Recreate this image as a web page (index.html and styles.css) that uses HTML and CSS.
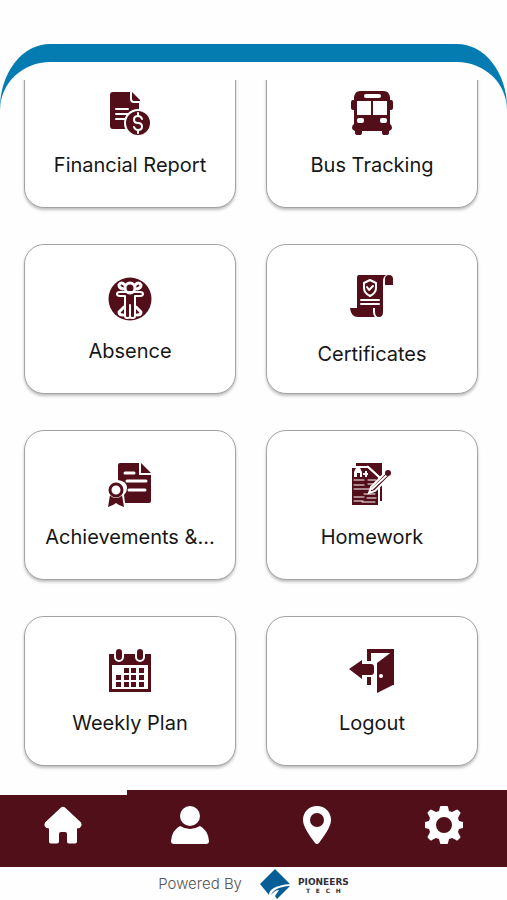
FILE: index.html
```html
<!DOCTYPE html>
<html lang="en">
<head>
    <meta charset="UTF-8">
    <meta name="viewport" content="width=device-width, initial-scale=1.0">
    <title>Home</title>
    <link rel="stylesheet" href="styles.css">
</head>
<body>
    <div class="panel">
        <main class="sheet">
            <div class="scroll">
                <div class="cards">
                    <a class="card" href="#financial">
                        <svg class="icon" viewBox="-1 0 44 44">
                            <path d="M4 1h17v7q0 4 4 4h5v8a14 14 0 0 0-13 18H4q-3 0-3-3V4q0-3 3-3z"/>
                            <path d="M23 1l8 8v1h-6q-2 0-2-2z"/>
                            <path class="line" d="M7 18h12M7 23h12M7 28h10" stroke-width="2"/>
                            <circle class="edge" cx="29" cy="32" r="13" stroke-width="2"/>
                            <path class="line" d="M33 28q-1-3-4-3-4 0-4 3.500t4 3.500 4 3.500-4 3.500q-3 0-4-3M29 22v3M29 39v3" stroke-width="2"/>
                        </svg>
                        <span class="label">Financial Report</span>
                    </a>
                    <a class="card" href="#bus">
                        <svg class="icon" viewBox="0 0 44 44">
                            <path d="M10 0h24q5 0 6 6v3h1q2 0 2 2v6q0 2-2 2h-1v14q2 1 2 4 0 2-3 3v2q0 2-2 2h-2q-3 0-3-2v-2H12v2q0 2-3 2H7q-2 0-2-2v-2q-3-1-3-3 0-3 2-4V19H3q-2 0-2-2v-6q0-2 2-2h1V6q1-6 6-6z"/>
                            <rect class="gap" x="14" y="3" width="17" height="4" rx="2"/>
                            <path class="gap" d="M7 10h14v14H7zM23 10h14v14H23z"/>
                            <rect class="gap" x="7" y="27" width="7" height="5" rx="2"/>
                            <rect class="gap" x="30" y="27" width="7" height="5" rx="2"/>
                        </svg>
                        <span class="label">Bus Tracking</span>
                    </a>
                    <a class="card" href="#absence">
                        <svg class="icon" viewBox="0 0 44 44">
                            <circle cx="22" cy="22" r="21.500"/>
                            <path class="line" d="M17 8q-4-4-6 0 0 3 4 4M27 8q4-4 6 0 0 3-4 4" stroke-width="3"/>
                            <circle class="line" cx="22" cy="11" r="5" stroke-width="3"/>
                            <path class="line" d="M12 15q-3 0-3 2t3 2h5v20q0 2 2 2h1q2 0 2-2V28v11q0 2 2 2h1q2 0 2-2V19h5q3 0 3-2t-3-2z" stroke-width="2"/>
                            <path class="line" d="M16 30l-5 5q0 3 4 3M28 30l5 5q0 3-4 3" stroke-width="3"/>
                        </svg>
                        <span class="label">Absence</span>
                    </a>
                    <a class="card card-raised" href="#certificates">
                        <svg class="icon" viewBox="1 0 44 44">
                            <path d="M10 1h27q-3 2-3 6v31q0 5-4 5t-4-5v-4H8V4q0-3 2-3z"/>
                            <path d="M36 11V5q0-4 4-4t4 4v6zM1 34h23v4q0 3 2 5H9q-7 0-8-9z"/>
                            <path class="line" d="M21 6l6 3v5q0 5-6 8-6-3-6-8V9zM18 13l2 3 4-4" stroke-width="2"/>
                            <path class="line" d="M12 26h18M12 30h18" stroke-width="2"/>
                        </svg>
                        <span class="label">Certificates</span>
                    </a>
                    <a class="card" href="#achievements">
                        <svg class="icon" viewBox="0 0 44 44">
                            <path d="M12 0h19v12h12v26q0 2-2 2H17l-1-8q3-3 3-7 0-7-9-8V2q0-2 2-2z"/>
                            <path d="M33 0l10 10H33z"/>
                            <path class="line" d="M17 10h9M19 18h19M21 27h16" stroke-width="3"/>
                            <path d="M2 32h12l2 12-5-2-3-2-3 2-5 2z"/>
                            <circle class="gap" cx="8" cy="27" r="8"/>
                            <circle class="ring" cx="8" cy="27" r="6" stroke-width="3"/>
                        </svg>
                        <span class="label">Achievements &amp;...</span>
                    </a>
                    <a class="card" href="#homework">
                        <svg class="icon" viewBox="1 0 44 44">
                            <path d="M7 0h26v38H7z"/>
                            <path class="edge" d="M2 4h17l11 10v29H2z" stroke-width="2"/>
                            <path class="gap" d="M5 14V9l2-4h4l2 4v5h-2v-4H8v4zM14 10h5v2h-5zM16 8h2v6h-2z"/>
                            <path class="line" d="M19 3l12 11M5 17h10M19 17h8M5 22h10M19 21h7M5 26h18M5 34h10M15 31h11M18 35h9M5 38h9M13 39h13" stroke-width="1"/>
                            <path class="edge" d="M20 30l2-6 15-15 4 4-15 15z" stroke-width="2"/>
                            <path class="line" d="M23 26L38 12" stroke-width="2"/>
                            <circle cx="39" cy="10" r="3"/>
                        </svg>
                        <span class="label">Homework</span>
                    </a>
                    <a class="card" href="#plan">
                        <svg class="icon" viewBox="0 0 44 44">
                            <path d="M1 5h42v38H1z"/>
                            <path class="gap" d="M4 16h36v24H4z"/>
                            <rect class="edge" x="7" y="-1" width="8" height="13" rx="4" stroke-width="2"/>
                            <rect class="edge" x="28" y="-1" width="8" height="13" rx="4" stroke-width="2"/>
                            <path d="M16 19h5v5h-5zM23 19h5v5h-5zM31 19h5v5h-5zM8 26h5v5H8zM16 26h5v5h-5zM23 26h5v5h-5zM31 26h5v5h-5zM8 33h5v5H8zM16 33h5v5h-5zM23 33h5v5h-5zM31 33h5v5h-5z"/>
                        </svg>
                        <span class="label">Weekly Plan</span>
                    </a>
                    <a class="card" href="#logout">
                        <svg class="icon" viewBox="1 0 44 44">
                            <path d="M18 0h27v36h-4V4H22v8h-4zM18 28h4v8h-4z"/>
                            <path d="M0 20l13-9v4h9q3 0 3 3v5q0 3-3 3h-9v4z"/>
                            <path d="M28 14L44 2v34L28 44z"/>
                            <circle class="gap" cx="32" cy="27" r="2"/>
                        </svg>
                        <span class="label">Logout</span>
                    </a>
                </div>
            </div>
        </main>
    </div>

    <nav class="tabs">
        <a class="tab active" href="#home" aria-label="Home">
            <svg class="tab-icon" viewBox="0 0 38 38">
                <path d="M17 1.500q2-1.500 4 0l16 15q1 2 0 4-1 2-4 2v13q0 2-3 2h-5q-2 0-2-2V28q0-2-2-2h-4q-2 0-2 2v7.500q0 2-2 2H8q-3 0-3-2v-13q-3 0-4-2-1-2 0-4z"/>
            </svg>
        </a>
        <a class="tab" href="#profile" aria-label="Profile">
            <svg class="tab-icon" viewBox="0 0 38 38">
                <circle cx="19" cy="10" r="10"/>
                <path d="M9 20q10 6 20 0 8 4 9 15 0 3-3 3H3q-3 0-3-3 1-11 9-15z"/>
            </svg>
        </a>
        <a class="tab" href="#location" aria-label="Location">
            <svg class="tab-icon" viewBox="0 0 38 38">
                <path fill-rule="evenodd" d="M19 0c8 0 14 6 14 14 0 7-7 16-12 23q-2 2-4 0C12 30 5 21 5 14 5 6 11 0 19 0zm0 7a7 7 0 1 0 0 14 7 7 0 0 0 0-14z"/>
            </svg>
        </a>
        <a class="tab" href="#settings" aria-label="Settings">
            <svg class="tab-icon" viewBox="0 0 38 38">
                <path fill-rule="evenodd" d="M16 0h6q1 0 1 1l1 4 3 1 4-2q1-1 2 0l2 2q1 1 0 2l-2 4 1 3 4 1q1 0 1 1v4q0 1-1 1l-4 1-1 3 2 4q1 1 0 2l-2 2q-1 1-2 0l-4-2-3 1-1 4q0 1-1 1h-6q-1 0-1-1l-1-4-3-1-4 2q-1 1-2 0l-2-2q-1-1 0-2l2-4-1-3-4-1q-1 0-1-1v-4q0-1 1-1l4-1 1-3-2-4q-1-1 0-2l2-2q1-1 2 0l4 2 3-1 1-4q0-1 1-1zm3 11a8 8 0 1 0 0 16 8 8 0 0 0 0-16z"/>
            </svg>
        </a>
    </nav>

    <footer class="footer">
        <span class="powered">Powered By</span>
        <svg class="logo" viewBox="0 0 32 32">
            <path d="M16 1l15 15q-21 2-21 11L1 16z"/>
            <path d="M31 18l-13 13-2-3 4-6q-4 0-8 5 3-8 19-9z"/>
        </svg>
        <span class="brand">
            <span class="brand-name">PIONEERS</span>
            <span class="brand-sub"><span>T</span><span>E</span><span>C</span><span>H</span></span>
        </span>
    </footer>
</body>
</html>
```

FILE: styles.css
```css
* {
    box-sizing: border-box;
}
body {
    margin: 0;
    padding-top: 44px;
    height: 100vh;
    display: flex;
    flex-direction: column;
    background-color: #fefefe;
    color: #161616;
    font-family: Inter, "Liberation Sans", sans-serif;
}
.panel {
    flex: 1;
    min-height: 0;
    display: flex;
    background: linear-gradient(#047bb1 80px, #fefefe 80px);
    border-radius: 50px 50px 0 0 / 64px 64px 0 0;
}
.sheet {
    flex: 1;
    display: flex;
    margin-top: 18px;
    padding-top: 18px;
    background-color: #fefefe;
    border-radius: 50px 50px 0 0 / 48px 48px 0 0;
}
/* list is scrolled to its end */
.scroll {
    flex: 1;
    display: flex;
    flex-direction: column;
    justify-content: flex-end;
    overflow: hidden;
    padding: 0 29px 24px 24px;
}
.cards {
    display: grid;
    grid-template-columns: 1fr 1fr;
    grid-auto-rows: 150px;
    gap: 36px 30px;
}
.card {
    display: flex;
    flex-direction: column;
    align-items: center;
    justify-content: center;
    gap: 16px;
    padding-top: 3px;
    border: 1px solid #a3a3a5;
    border-radius: 20px;
    background-color: #fff;
    box-shadow: 0 2px 3px rgba(0, 0, 0, 0.25);
    color: inherit;
    text-decoration: none;
}
.card-raised {
    gap: 22px;
}
.icon {
    width: 44px;
    height: 44px;
    overflow: visible;
    fill: #520f1a;
}
.icon .line {
    fill: none;
    stroke: #fff;
    stroke-linecap: round;
    stroke-linejoin: round;
}
.icon .gap {
    fill: #fff;
}
.icon .ring {
    fill: none;
    stroke: #520f1a;
}
.icon .edge {
    stroke: #fff;
}
.label {
    font-size: 20px;
    font-weight: 400;
    line-height: 28px;
}
.tabs {
    display: flex;
    height: 77px;
    background-color: #500f19;
}
.tab {
    flex: 1;
    display: flex;
    justify-content: center;
    align-items: flex-start;
    padding-top: 16px;
}
.active {
    padding-top: 11px;
    border-top: 5px solid #fefefe;
}
.tab-icon {
    width: 38px;
    height: 38px;
    fill: #fff;
}
.footer {
    display: flex;
    align-items: center;
    justify-content: center;
    height: 33px;
}
.powered {
    color: #555;
    font-size: 15px;
    font-weight: 300;
}
.logo {
    width: 32px;
    height: 32px;
    margin: 0 7px 0 17px;
    fill: #075d95;
}
.brand {
    display: flex;
    flex-direction: column;
    padding-top: 4px;
    color: #30303a;
    font-family: "DejaVu Sans", sans-serif;
    font-weight: bold;
}
.brand-name {
    font-size: 9px;
    line-height: 10px;
}
.brand-sub {
    display: flex;
    justify-content: space-between;
    padding: 0 8px;
    font-size: 6px;
    line-height: 7px;
}
```
